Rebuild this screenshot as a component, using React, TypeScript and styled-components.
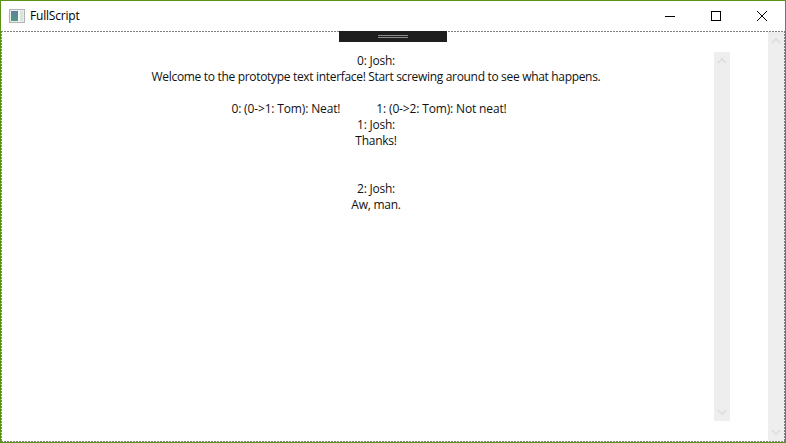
import React from "react";
import styled, { createGlobalStyle } from "styled-components";

const GlobalStyle = createGlobalStyle`
  html, body {
    margin: 0;
    padding: 0;
    background: #fff;
  }
  body {
    font-family: "Open Sans", "Noto Sans", "Liberation Sans", sans-serif;
    color: #111;
  }
`;

const Frame = styled.div`
  width: 786px;
  height: 443px;
  box-sizing: border-box;
  border: 1px solid #5a9216;
  display: flex;
  flex-direction: column;
  position: relative;
  overflow: hidden;
`;

const TitleBar = styled.div`
  height: 30px;
  flex: none;
  display: flex;
  align-items: center;
`;

const AppIcon = styled.svg`
  width: 16px;
  height: 16px;
  margin-left: 8px;
  flex: none;
`;

const Title = styled.span`
  font-size: 12px;
  margin-left: 5px;
  padding-bottom: 2px;
  letter-spacing: -0.2px;
  color: #000;
  flex: 1;
`;

const WinButton = styled.div`
  width: 46px;
  height: 30px;
  display: flex;
  align-items: center;
  justify-content: center;
`;

// 2px on, 1px off, as the focus rectangle in the original window
const dashX = "repeating-linear-gradient(90deg, #808080 0 2px, transparent 2px 3px)";
const dashY = "repeating-linear-gradient(180deg, #808080 0 2px, transparent 2px 3px)";

const Body = styled.div`
  flex: 1;
  min-height: 0;
  display: flex;
  padding: 1px;
  background-image: ${dashX}, ${dashX}, ${dashY}, ${dashY};
  background-size: 100% 1px, 100% 1px, 1px 100%, 1px 100%;
  background-position: 0 0, 0 100%, 0 0, 100% 0;
  background-repeat: no-repeat;
`;

const Drawer = styled.div`
  position: absolute;
  top: 30px;
  left: 338px;
  width: 108px;
  height: 11px;
  background: #1e1e1e;
  display: flex;
  flex-direction: column;
  align-items: center;
  gap: 1px;
  padding-top: 4px;
  box-sizing: border-box;
`;

const Grip = styled.div`
  width: 30px;
  height: 1px;
  background: #8a8a8a;
`;

const Pane = styled.div`
  flex: 1;
  min-width: 0;
  display: flex;
  padding: 20px 38px 20px 20px;
`;

const Messages = styled.div`
  flex: 1;
  min-width: 0;
  padding: 1px 0 0 16px;
  font-size: 12px;
  line-height: 16px;
  text-align: center;
  letter-spacing: -0.25px;
`;

const Line = styled.div<{ $spacing?: number }>`
  height: 16px;
  white-space: nowrap;
  letter-spacing: ${(p) => (p.$spacing !== undefined ? `${p.$spacing}px` : "inherit")};
`;

const Blank = styled.div<{ $lines: number }>`
  height: ${(p) => p.$lines * 16}px;
`;

const Branches = styled.div`
  height: 16px;
  display: flex;
  justify-content: center;
  gap: 36px;
  margin-left: -14px;
  white-space: nowrap;
  letter-spacing: -0.15px;
`;

const Scrollbar = styled.div`
  width: 16px;
  flex: none;
  background: #eeeeee;
  display: flex;
  flex-direction: column;
  justify-content: space-between;
  align-items: center;
  padding: 6px 0;
  box-sizing: border-box;
`;

const Chevron = styled.svg`
  width: 10px;
  height: 6px;
  display: block;
`;

const ChevronUp = () => (
  <Chevron viewBox="0 0 10 6">
    <path d="M1 5 L5 1 L9 5" fill="none" stroke="#dcdcdc" strokeWidth="1.6" />
  </Chevron>
);

const ChevronDown = () => (
  <Chevron viewBox="0 0 10 6">
    <path d="M1 1 L5 5 L9 1" fill="none" stroke="#dcdcdc" strokeWidth="1.6" />
  </Chevron>
);

export default function App() {
  return (
    <>
      <GlobalStyle />
      <Frame>
        <TitleBar>
          <AppIcon viewBox="0 0 16 16">
            <defs>
              <linearGradient id="appIconFill" x1="0" y1="0" x2="0" y2="1">
                <stop offset="0" stopColor="#5f7f9f" />
                <stop offset="1" stopColor="#4f9a80" />
              </linearGradient>
            </defs>
            <rect x="0.5" y="1.5" width="15" height="13" fill="#ececec" stroke="#b4b4b4" />
            <rect x="2" y="3" width="7" height="10" fill="url(#appIconFill)" />
            <rect x="9" y="3" width="2" height="10" fill="#f6f6f6" />
            <rect x="11" y="3" width="3" height="10" fill="#d8e4dc" />
          </AppIcon>
          <Title>FullScript</Title>
          <WinButton>
            <svg width="10" height="10" viewBox="0 0 10 10">
              <path d="M0 5.5 H10" stroke="#000" strokeWidth="1" />
            </svg>
          </WinButton>
          <WinButton>
            <svg width="10" height="10" viewBox="0 0 10 10">
              <rect x="0.5" y="0.5" width="9" height="9" fill="none" stroke="#000" strokeWidth="1" />
            </svg>
          </WinButton>
          <WinButton>
            <svg width="10" height="10" viewBox="0 0 10 10">
              <path d="M0 0 L10 10 M10 0 L0 10" stroke="#000" strokeWidth="1" />
            </svg>
          </WinButton>
        </TitleBar>
        <Body>
          <Pane>
            <Messages>
              <Line>0: Josh:</Line>
              <Line $spacing={-0.32}>Welcome to the prototype text interface! Start screwing around to see what happens.</Line>
              <Blank $lines={1} />
              <Branches>
                <span>0: (0-&gt;1: Tom): Neat!</span>
                <span>1: (0-&gt;2: Tom): Not neat!</span>
              </Branches>
              <Line>1: Josh:</Line>
              <Line>Thanks!</Line>
              <Blank $lines={2} />
              <Line>2: Josh:</Line>
              <Line>Aw, man.</Line>
            </Messages>
            <Scrollbar>
              <ChevronUp />
              <ChevronDown />
            </Scrollbar>
          </Pane>
          <Scrollbar>
            <ChevronUp />
            <ChevronDown />
          </Scrollbar>
        </Body>
        <Drawer>
          <Grip />
          <Grip />
        </Drawer>
      </Frame>
    </>
  );
}
